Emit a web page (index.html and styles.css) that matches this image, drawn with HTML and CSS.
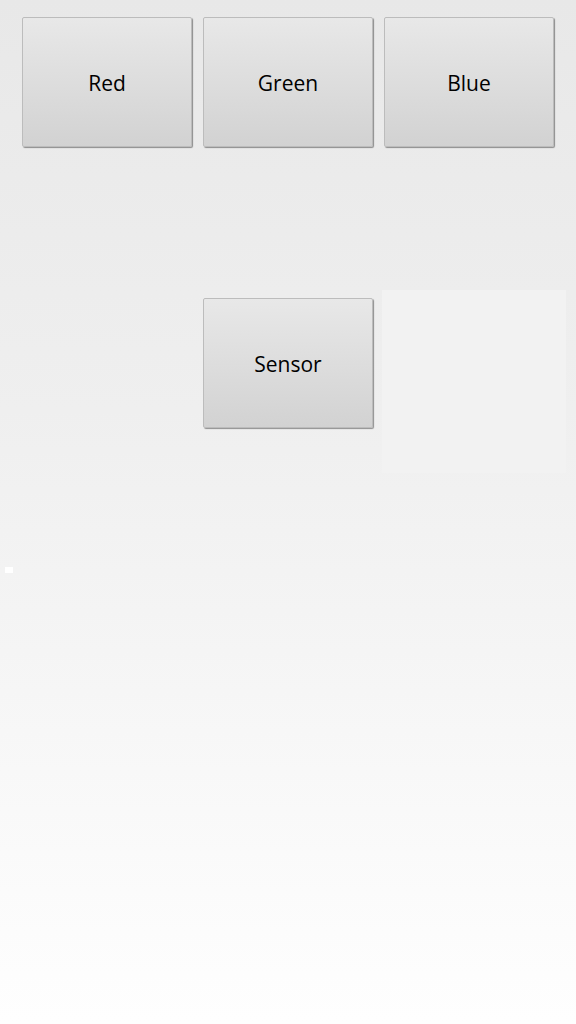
FILE: index.html
```html
<!DOCTYPE html>
<html>
<head>
<meta charset="utf-8">
<link rel="stylesheet" href="styles.css">
</head>
<body>
<main class="screen">
  <div class="pad">
    <button class="btn">Red</button>
    <button class="btn">Green</button>
    <button class="btn">Blue</button>
    <button class="btn sensor">Sensor</button>
    <div class="ghost"></div>
  </div>
  <span class="dot"></span>
</main>
</body>
</html>
```
FILE: styles.css
```css
html, body {
  margin: 0;
  padding: 0;
}
body {
  width: 576px;
  height: 1024px;
  background: linear-gradient(to bottom, #e8e8e8 0%, #efefef 40%, #fdfdfd 95%, #fefefe 100%);
  font-family: "Open Sans", "Noto Sans", sans-serif;
  overflow: hidden;
}
.screen {
  position: relative;
  height: 1024px;
  padding: 17px 22px 0 22px;
  box-sizing: border-box;
}
.pad {
  display: grid;
  grid-template-columns: 170px 170px 170px;
  grid-template-rows: 130px 130px;
  column-gap: 11px;
  row-gap: 151px;
}
.btn {
  margin: 0;
  padding: 1px 0 0 0;
  border: 1px solid #bcbcbc;
  border-radius: 2px;
  background: linear-gradient(to bottom, #e8e8e8 0%, #dcdcdc 55%, #d2d2d2 100%);
  box-shadow: 1px 1px 1px rgba(0, 0, 0, 0.4);
  font-family: "Open Sans", "Noto Sans", sans-serif;
  font-size: 21px;
  color: #000;
  box-sizing: border-box;
  display: flex;
  align-items: center;
  justify-content: center;
}
.sensor {
  grid-column: 2;
  grid-row: 2;
}
.ghost {
  grid-column: 3;
  grid-row: 2;
  margin: -8px -12px 0 -2px;
  height: 183px;
  background: #f2f2f2;
}
.dot {
  position: absolute;
  left: 5px;
  top: 567px;
  width: 8px;
  height: 6px;
  background: #ffffff;
}
```
